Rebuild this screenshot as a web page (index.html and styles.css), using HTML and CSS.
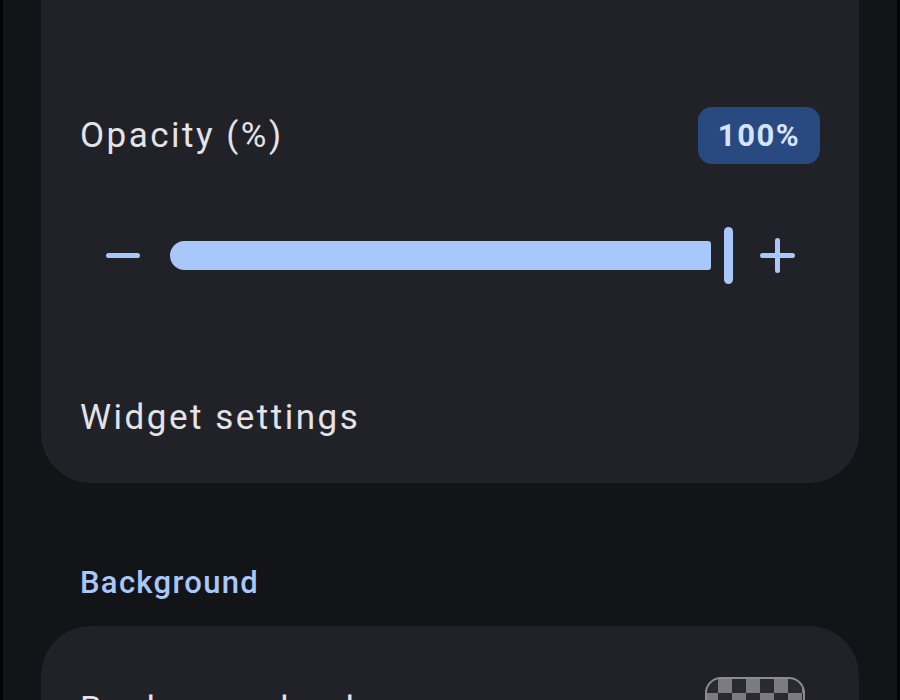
FILE: index.html
```html
<!DOCTYPE html>
<html>
<head>
<meta charset="utf-8">
<link rel="stylesheet" href="styles.css">
</head>
<body>
<div class="screen">
  <section class="card card-top">
    <div class="row-head">
      <span class="label">Opacity (%)</span>
      <span class="badge">100%</span>
    </div>
    <div class="slider">
      <span class="minus"></span>
      <div class="track"></div>
      <span class="handle"></span>
      <span class="plus"></span>
    </div>
    <div class="label widget">Widget settings</div>
  </section>

  <h2 class="section-title">Background</h2>

  <section class="card card-bottom">
    <div class="row-bg">
      <span class="label bg-label">Background color</span>
      <span class="checker"></span>
    </div>
  </section>
</div>
</body>
</html>
```
FILE: styles.css
```css
html, body {
  margin: 0;
  padding: 0;
  background: #050506;
  height: 700px;
  overflow: hidden;
}
.screen {
  margin: 0 3px;
  height: 700px;
  background: #131418;
  padding: 0 38px;
  font-family: Roboto, "Liberation Sans", sans-serif;
  overflow: hidden;
}
.card {
  background: #212228;
  border-radius: 50px;
  padding-left: 39px;
  padding-right: 39px;
}
.card-top {
  border-radius: 0 0 50px 50px;
  padding-top: 107px;
  padding-bottom: 45px;
}
.row-head {
  display: flex;
  justify-content: space-between;
  align-items: center;
  height: 57px;
}
.label {
  font-size: 35px;
  color: #e3e3e8;
  line-height: 41px;
  letter-spacing: 2.5px;
}
.badge {
  background: #284a80;
  color: #d6e3ff;
  font-weight: 700;
  font-size: 31px;
  border-radius: 14px;
  width: 122px;
  height: 57px;
  display: flex;
  align-items: center;
  justify-content: center;
  letter-spacing: 1.5px;
}
.slider {
  margin: 63px 25px 0 26px;
  height: 57px;
  display: flex;
  align-items: center;
}
.minus {
  width: 34px;
  height: 5px;
  background: #a8c7fa;
  border-radius: 3px;
}
.track {
  margin-left: 30px;
  width: 541px;
  height: 29px;
  background: #a8c7fa;
  border-radius: 15px 3px 3px 15px;
}
.handle {
  margin-left: 13px;
  width: 9px;
  height: 57px;
  background: #a8c7fa;
  border-radius: 5px;
}
.plus {
  margin-left: 27px;
  width: 35px;
  height: 35px;
  position: relative;
}
.plus::before, .plus::after {
  content: "";
  position: absolute;
  background: #a8c7fa;
  border-radius: 3px;
}
.plus::before {
  left: 0;
  right: 0;
  top: 15px;
  height: 5px;
}
.plus::after {
  top: 0;
  bottom: 0;
  left: 15px;
  width: 5px;
}
.widget {
  margin-top: 113px;
}
.section-title {
  margin: 82px 0 25px 39px;
  font-size: 31px;
  font-weight: 500;
  color: #a8c7fa;
  line-height: 36px;
  letter-spacing: 1.3px;
}
.card-bottom {
  padding-top: 51px;
  height: 200px;
}
.row-bg {
  display: flex;
  justify-content: space-between;
  align-items: flex-start;
}
.bg-label {
  margin-top: 12px;
}
.checker {
  margin-right: 15px;
  width: 96px;
  height: 70px;
  border: 2px solid #8c8c90;
  border-radius: 16px;
  background-color: #2a2b30;
  background-image: conic-gradient(#7c7c80 25%, #2a2b30 0 50%, #7c7c80 0 75%, #2a2b30 0);
  background-size: 28px 28px;
  background-position: -3px 0;
}
```
